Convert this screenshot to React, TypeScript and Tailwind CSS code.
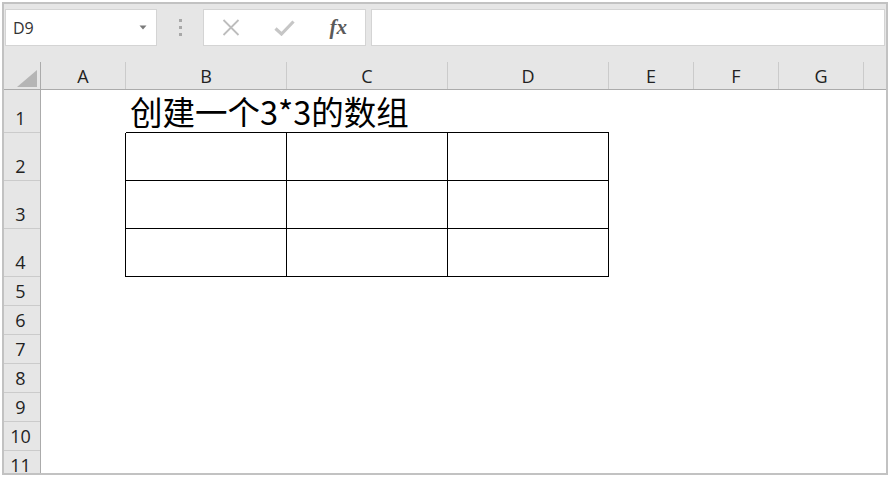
import React from "react";

const columns = [
  { name: "A", w: "w-[85px]" },
  { name: "B", w: "w-[161px]" },
  { name: "C", w: "w-[161px]" },
  { name: "D", w: "w-[161px]" },
  { name: "E", w: "w-[85px]" },
  { name: "F", w: "w-[85px]" },
  { name: "G", w: "w-[85px]" },
];

const rows = [
  { n: 1, h: "h-[43px]" },
  { n: 2, h: "h-[48px]" },
  { n: 3, h: "h-[48px]" },
  { n: 4, h: "h-[48px]" },
  { n: 5, h: "h-[29px]" },
  { n: 6, h: "h-[29px]" },
  { n: 7, h: "h-[29px]" },
  { n: 8, h: "h-[29px]" },
  { n: 9, h: "h-[29px]" },
  { n: 10, h: "h-[29px]" },
  { n: 11, h: "h-[29px]" },
];

const uiFont = { fontFamily: '"Open Sans", "Liberation Sans", sans-serif' };

// which border a cell needs for the B2:D4 table
function cellClass(r: number, c: number) {
  if (r >= 1 && r <= 3 && c === 0) return "border-r border-black";
  if (r >= 1 && r <= 3 && c >= 1 && c <= 3) return "border-r border-b border-black";
  return "";
}

function FormulaBar() {
  return (
    <div className="flex h-[58px] shrink-0 items-start pt-[5px]" style={uiFont}>
      {/* Name box */}
      <div className="ml-[1px] flex h-[37px] w-[152px] items-center justify-between border border-[#d4d4d4] bg-white pl-[7px] pr-[9px]">
        <span className="text-[16px] leading-none text-[#333]">D9</span>
        <svg width="8" height="5" viewBox="0 0 8 5">
          <path d="M0.5 0.5 L7.5 0.5 L4 4.5 Z" fill="#7a7a7a" />
        </svg>
      </div>

      {/* Grip dots */}
      <div className="flex h-[37px] w-[46px] flex-col items-center justify-center gap-[4px]">
        <span className="block h-[3px] w-[3px] bg-[#a8a8a8]" />
        <span className="block h-[3px] w-[3px] bg-[#a8a8a8]" />
        <span className="block h-[3px] w-[3px] bg-[#a8a8a8]" />
      </div>

      {/* Cancel / enter / function */}
      <div className="flex h-[37px] w-[163px] items-center border border-[#d4d4d4] bg-white">
        <div className="flex w-[54px] justify-center">
          <svg width="18" height="17" viewBox="0 0 18 17">
            <path d="M1.5 1 L16.5 16 M16.5 1 L1.5 16" stroke="#bdbdbd" strokeWidth="1.8" />
          </svg>
        </div>
        <div className="flex w-[54px] justify-center">
          <svg width="21" height="16" viewBox="0 0 21 16">
            <path d="M1.5 8.5 L7.5 14 L19.5 1.5" stroke="#c6c6c6" strokeWidth="3.2" fill="none" />
          </svg>
        </div>
        <div className="flex w-[54px] justify-center">
          <span
            className="text-[21px] font-bold italic leading-none text-[#5a5a5a]"
            style={{ fontFamily: '"Liberation Serif", serif' }}
          >
            fx
          </span>
        </div>
      </div>

      {/* Formula input */}
      <div className="ml-[5px] mr-[1px] h-[37px] flex-1 border border-[#d4d4d4] bg-white" />
    </div>
  );
}

function ColumnHeaders() {
  return (
    <div className="flex h-[28px] shrink-0 border-b border-[#ababab]" style={uiFont}>
      <div className="flex w-[37px] items-end justify-end border-r border-[#ababab] pb-[2px] pr-[3px]">
        <svg width="20" height="17" viewBox="0 0 20 17">
          <path d="M20 0 L20 17 L0 17 Z" fill="#b5b5b5" />
        </svg>
      </div>
      {columns.map((c) => (
        <div
          key={c.name}
          className={`${c.w} flex items-center justify-center border-r border-[#cbcbcb] text-[18px] leading-none text-[#222]`}
        >
          {c.name}
        </div>
      ))}
      <div className="flex-1" />
    </div>
  );
}

export default function App() {
  return (
    <div className="h-[477px] w-[891px] overflow-hidden bg-white pb-[2px] pl-[2px] pr-[3px] pt-[2px]">
      <div className="flex h-full w-full flex-col overflow-hidden border-2 border-[#c2c2c2] bg-[#e6e6e6]">
        <FormulaBar />
        <ColumnHeaders />

        <div className="flex min-h-0 flex-1 overflow-hidden">
          {/* Row headers */}
          <div className="w-[37px] shrink-0 border-r border-[#ababab]" style={uiFont}>
            {rows.map((r) => (
              <div
                key={r.n}
                className={`${r.h} flex items-end justify-center border-b border-[#cbcbcb] pb-[5px] pr-[3px] text-[18px] leading-none text-[#222]`}
              >
                {r.n}
              </div>
            ))}
          </div>

          {/* Cells */}
          <div className="min-w-0 flex-1 bg-white">
            {rows.map((r, ri) =>
              ri === 0 ? (
                <div key={r.n} className={`${r.h} flex`}>
                  <div className="w-[85px] shrink-0" />
                  {/* B1 text spills over C1 and D1 */}
                  <div
                    className="flex w-[483px] shrink-0 items-end border-b border-black pb-[2px] pl-[4px] text-[32.5px] leading-[1.2] text-black whitespace-nowrap"
                    style={{ fontFamily: '"Noto Sans CJK SC", "Noto Sans", sans-serif' }}
                  >
                    创建一个3*3的数组
                  </div>
                  <div className="w-[85px] shrink-0" />
                  <div className="w-[85px] shrink-0" />
                  <div className="w-[85px] shrink-0" />
                </div>
              ) : (
                <div key={r.n} className={`${r.h} flex`}>
                  {columns.map((c, ci) => (
                    <div key={c.name} className={`${c.w} shrink-0 ${cellClass(ri, ci)}`} />
                  ))}
                </div>
              )
            )}
          </div>
        </div>
      </div>
    </div>
  );
}
